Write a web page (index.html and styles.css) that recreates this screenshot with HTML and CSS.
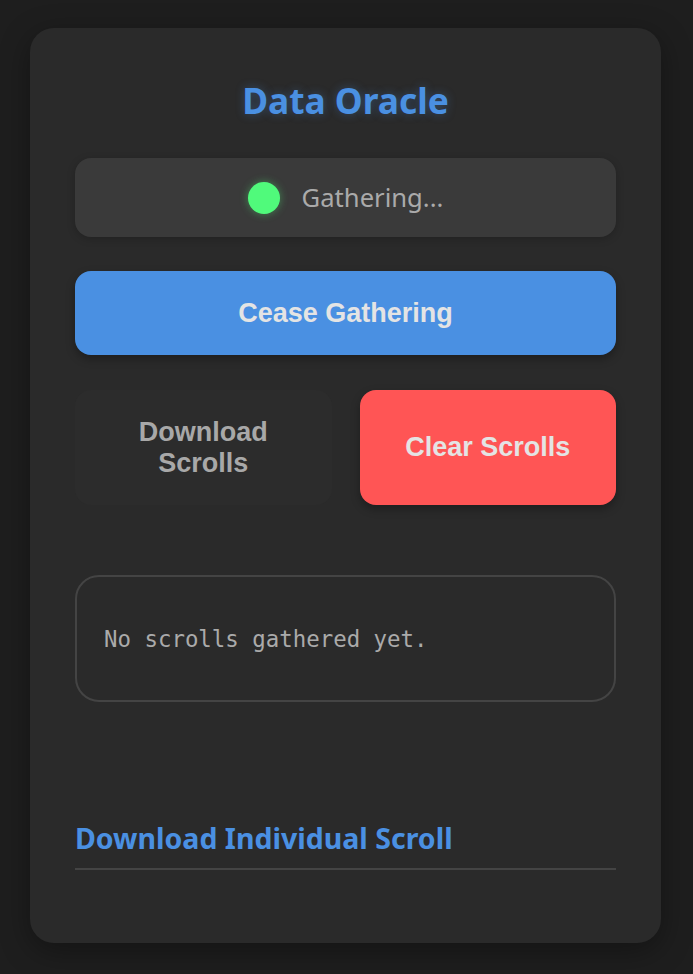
FILE: index.html
```html
<!DOCTYPE html>
<html lang="en">
<head>
<meta charset="utf-8">
<title>Data Oracle</title>
<link rel="stylesheet" href="styles.css">
</head>
<body>
<main class="card">
  <h1 class="title">Data Oracle</h1>
  <div class="status">
    <span class="dot"></span>
    <span class="status-text">Gathering...</span>
  </div>
  <button class="btn btn-primary">Cease Gathering</button>
  <div class="btn-row">
    <button class="btn btn-muted">Download Scrolls</button>
    <button class="btn btn-danger">Clear Scrolls</button>
  </div>
  <div class="log">No scrolls gathered yet.</div>
  <h2 class="section-title">Download Individual Scroll</h2>
</main>
</body>
</html>
```
FILE: styles.css
```css
html, body {
  margin: 0;
  padding: 0;
}
body {
  background: #1e1e1e;
  padding: 28px 32px 32px 30px;
  font-family: "Noto Sans", "Open Sans", sans-serif;
}
.card {
  background: #2a2a2a;
  border-radius: 24px;
  padding: 48px 45px 73px 45px;
  box-shadow: 0 8px 30px rgba(0,0,0,0.35);
  display: flex;
  flex-direction: column;
}
.title {
  margin: 0;
  text-align: center;
  color: #4a90e2;
  font-size: 35.3px;
  font-weight: 700;
  line-height: 48px;
  text-shadow: 0 0 10px rgba(74,144,226,0.35);
}
.status {
  margin-top: 34px;
  height: 79px;
  background: #3a3a3a;
  border-radius: 16px;
  display: flex;
  align-items: center;
  justify-content: center;
  gap: 22px;
  box-shadow: 0 2px 8px rgba(0,0,0,0.2);
}
.dot {
  width: 32px;
  height: 32px;
  border-radius: 50%;
  background: #50fa7b;
  box-shadow: 0 0 8px rgba(80,250,123,0.4);
}
.status-text {
  color: #aaaaaa;
  font-size: 25.6px;
}
.btn {
  border: none;
  border-radius: 16px;
  font-family: "Liberation Sans", Arial, sans-serif;
  font-weight: 700;
  font-size: 27px;
  color: #e4e4e4;
  cursor: pointer;
}
.btn-primary {
  margin-top: 34px;
  height: 84px;
  background: #4a90e2;
  box-shadow: 0 4px 10px rgba(0,0,0,0.3);
}
.btn-row {
  margin-top: 35px;
  display: grid;
  grid-template-columns: 1fr 1fr;
  gap: 28px;
}
.btn-row .btn {
  height: 115px;
  line-height: 31px;
  padding: 0 30px;
}
.btn-muted {
  background: #2c2c2c;
  color: #a8a8a8;
}
.btn-danger {
  background: #ff5555;
  box-shadow: 0 4px 10px rgba(0,0,0,0.3);
}
.log {
  margin-top: 70px;
  height: 123px;
  border: 2px solid #444444;
  border-radius: 24px;
  display: flex;
  align-items: center;
  padding: 0 27px;
  color: #aaaaaa;
  font-family: "DejaVu Sans Mono", monospace;
  font-size: 22.4px;
}
.section-title {
  margin: 116px 0 0 0;
  color: #4a90e2;
  font-size: 28.5px;
  font-weight: 700;
  line-height: 40px;
  padding-bottom: 10px;
  border-bottom: 2px solid #444444;
}
```
